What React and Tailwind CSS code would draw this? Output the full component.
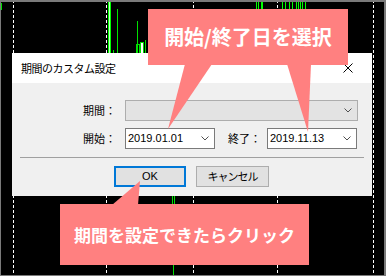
const JP = "font-['Noto_Sans_CJK_JP',sans-serif]";

function Chevron() {
  return (
    <svg width="8" height="5" viewBox="0 0 8 5" className="shrink-0">
      <path d="M0.5 0.5 L4 4 L7.5 0.5" fill="none" stroke="#505050" strokeWidth="1" />
    </svg>
  );
}

function ChartBg() {
  const dashes = [13.5, 106.5, 193.5, 277.5, 373.5];
  const topLines = [256, 258, 261, 262, 282, 285, 289, 292, 296, 298, 300, 302, 305];
  return (
    <svg className="absolute inset-0" width="386" height="276">
      {dashes.map((x) => (
        <line key={x} x1={x} y1="0" x2={x} y2="276" stroke="#fff" strokeWidth="1" strokeDasharray="3 2" />
      ))}
      <rect x="108" y="0" width="3" height="53" fill="#00ff00" />
      <line x1="109.5" y1="0" x2="109.5" y2="53" stroke="#c8ffc8" />
      <line x1="117.5" y1="9" x2="117.5" y2="53" stroke="#00e000" />
      <line x1="113.5" y1="50" x2="113.5" y2="53" stroke="#00e000" />
      <line x1="137.5" y1="21" x2="137.5" y2="53" stroke="#00e000" />
      <rect x="136.5" y="44.5" width="3" height="9" fill="none" stroke="#00e000" />
      <rect x="140.5" y="42.5" width="3" height="11" fill="#fff" stroke="#00e000" />
      <line x1="145.5" y1="40" x2="145.5" y2="53" stroke="#00e000" />
      {topLines.map((x) => (
        <line key={x} x1={x + 0.5} y1="0" x2={x + 0.5} y2="9" stroke="#00ff00" />
      ))}
      <line x1="1.5" y1="3" x2="1.5" y2="10" stroke="#00e000" />
      <line x1="172.5" y1="196" x2="172.5" y2="204" stroke="#00e000" />
      <line x1="174.5" y1="196" x2="174.5" y2="204" stroke="#00e000" />
      <line x1="173.5" y1="265" x2="173.5" y2="276" stroke="#00e000" />
    </svg>
  );
}

export default function App() {
  return (
    <div className={`relative w-[386px] h-[276px] overflow-hidden bg-black pt-[53px] pl-[12px] ${JP}`}>
      <ChartBg />

      {/* dialog */}
      <div className="relative w-[360px] h-[143px] flex flex-col bg-[#f0f0f0] text-black">
        <div className="h-[30px] shrink-0 bg-white flex items-center justify-between pl-[9px] pr-[19px]">
          <span className="text-[11px] tracking-[-0.5px] leading-none">期間のカスタム設定</span>
          <svg width="10" height="10" viewBox="0 0 10 10">
            <path d="M0.5 0.5 L9.5 9.5 M9.5 0.5 L0.5 9.5" stroke="#000" strokeWidth="1" />
          </svg>
        </div>

        <div className="flex flex-col pt-[17px]">
          <div className="flex items-center gap-[6px] pl-[71px]">
            <span className="w-[36px] text-[11px] leading-none">期間：</span>
            <div className="w-[233px] h-[21px] border border-[#adadad] bg-[#e3e3e3] flex items-center justify-end pr-[5px]">
              <Chevron />
            </div>
          </div>

          <div className="flex items-center pl-[71px] mt-[7px]">
            <span className="w-[36px] text-[11px] leading-none">開始：</span>
            <div className="ml-[6px] w-[90px] h-[21px] border border-[#7a7a7a] bg-white flex items-center justify-between pl-[2px] pr-[5px]">
              <span className="font-['Liberation_Sans',sans-serif] text-[11px] leading-none">2019.01.01</span>
              <Chevron />
            </div>
            <span className="ml-[13px] w-[36px] text-[11px] leading-none">終了：</span>
            <div className="ml-[3px] w-[90px] h-[21px] border border-[#7a7a7a] bg-white flex items-center justify-between pl-[2px] pr-[5px]">
              <span className="font-['Liberation_Sans',sans-serif] text-[11px] leading-none">2019.11.13</span>
              <Chevron />
            </div>
          </div>

          <div className="mx-[8px] mt-[8px] h-px bg-[#a0a0a0]" />

          <div className="flex justify-center gap-[10px] mt-[8px] pr-[1px]">
            <button className="w-[72px] h-[21px] border-2 border-[#0078d7] bg-[#e1e1e1] flex items-center justify-center font-['Liberation_Sans',sans-serif] text-[11px] leading-none">
              OK
            </button>
            <button className="w-[73px] h-[21px] border border-[#adadad] bg-[#e1e1e1] flex items-center justify-center text-[11px] tracking-[-1px] leading-none">
              キャンセル
            </button>
          </div>
        </div>
      </div>

      {/* callouts */}
      <svg className="absolute inset-0 pointer-events-none" width="386" height="276">
        <polygon points="185,64 212,64 168,129" fill="#ff8080" />
        <polygon points="287,64 311,64 308,132" fill="#ff8080" />
        <polygon points="112,205 138,205 140,181" fill="#ff8080" />
      </svg>
      <div className="absolute left-[148px] top-[9px] w-[200px] h-[56px] bg-[#ff8080] flex items-center justify-center text-white font-bold text-[20px] leading-none">
        開始/終了日を選択
      </div>
      <div className="absolute left-[60px] top-[204px] w-[249px] h-[61px] bg-[#ff8080] flex items-center justify-center text-white font-bold text-[17px] leading-none">
        期間を設定できたらクリック
      </div>

      <div className="absolute inset-0 pointer-events-none border-t-2 border-r-2 border-l border-b border-[#7a7a7a]" />
    </div>
  );
}
